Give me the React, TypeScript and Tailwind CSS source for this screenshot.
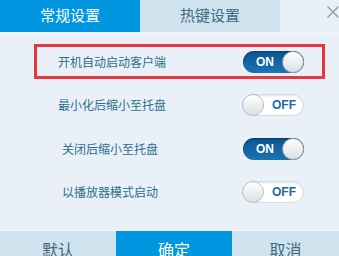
import { useState } from 'react';

const font = { fontFamily: '"Noto Sans CJK SC", "Microsoft YaHei", sans-serif' };

interface ToggleProps {
  on: boolean;
  onChange: () => void;
}

function Toggle({ on, onChange }: ToggleProps) {
  return (
    <button
      type="button"
      onClick={onChange}
      className={
        on
          ? 'relative flex h-[22px] w-[61px] items-center rounded-full bg-gradient-to-b from-[#0b568f] to-[#1a74b6] shadow-[inset_0_1px_2px_rgba(0,0,0,0.35)]'
          : 'relative flex h-[22px] w-[62px] items-center rounded-full border border-[#d4dde4] bg-white shadow-[inset_0_1px_2px_rgba(0,0,0,0.12)]'
      }
    >
      <span
        className={
          on
            ? 'absolute left-[13px] text-[12px] font-bold text-white'
            : 'absolute left-[29px] text-[12px] font-bold text-[#1d6aa3]'
        }
        style={{ fontFamily: '"Liberation Sans", Arial, sans-serif' }}
      >
        {on ? 'ON' : 'OFF'}
      </span>
      <span
        className={
          on
            ? 'absolute right-0 top-0 h-[22px] w-[22px] rounded-full border border-[#9aa4ab] bg-gradient-to-b from-white to-[#dcdfe2]'
            : 'absolute -left-px -top-px h-[22px] w-[22px] rounded-full border border-[#b9c1c7] bg-gradient-to-b from-white to-[#dcdfe2]'
        }
      />
    </button>
  );
}

export default function App() {
  const [opts, setOpts] = useState([true, false, true, false]);
  const labels = ['开机自动启动客户端', '最小化后缩小至托盘', '关闭后缩小至托盘', '以播放器模式启动'];

  const flip = (i: number) => setOpts(opts.map((v, j) => (j === i ? !v : v)));

  return (
    <div className="flex h-[256px] w-[339px] flex-col overflow-hidden bg-[#e9f0f7]" style={font}>
      {/* 탭 */}
      <div className="flex h-[32px] shrink-0">
        <div className="flex w-[140px] items-center justify-center bg-[#0097e0] pb-[2px] text-[15px] text-white">
          常规设置
        </div>
        <div className="flex w-[140px] items-center justify-center bg-[#cfe4ee] pb-[2px] text-[15px] text-[#3f6b80]">
          热键设置
        </div>
        <div className="flex flex-1 justify-end pt-[6px]">
          <svg width="12" height="12" viewBox="0 0 12 12">
            <path d="M0.5 0.5 L11.5 11.5 M11.5 0.5 L0.5 11.5" stroke="#8a9ba6" strokeWidth="1.3" />
          </svg>
        </div>
      </div>
      <div className="h-[3px] shrink-0 bg-[#f1f6fa]" />

      {/* 설정 목록 */}
      <div className="flex flex-col gap-[8.5px] pl-[34px] pt-[9px]">
        {labels.map((label, i) => (
          <div
            key={label}
            className={
              i === 0
                ? 'flex h-[35px] w-[291px] items-center border-[3px] border-[#e8383d] pr-[18px]'
                : 'flex h-[35px] w-[291px] items-center border-[3px] border-transparent pr-[18px]'
            }
          >
            <span className={i < 2 ? 'pl-[21px] text-[12px] text-[#2c6f8c]' : 'pl-[25px] text-[12px] text-[#2c6f8c]'}>
              {label}
            </span>
            <div className="ml-auto">
              <Toggle on={opts[i]} onChange={() => flip(i)} />
            </div>
          </div>
        ))}
      </div>

      {/* 하단 버튼 */}
      <div className="mt-auto flex h-[26px] shrink-0 border-t border-[#f4f8fb]">
        <button type="button" className="flex w-[116px] justify-center bg-[#cfe4ee] pt-[6px] text-[16px] leading-[24px] text-[#3f6b80]">
          默认
        </button>
        <button type="button" className="flex w-[116px] justify-center bg-[#0097e0] pt-[6px] text-[16px] leading-[24px] text-white">
          确定
        </button>
        <button type="button" className="flex flex-1 justify-center bg-[#cfe4ee] pt-[6px] text-[16px] leading-[24px] text-[#3f6b80]">
          取消
        </button>
      </div>
    </div>
  );
}
